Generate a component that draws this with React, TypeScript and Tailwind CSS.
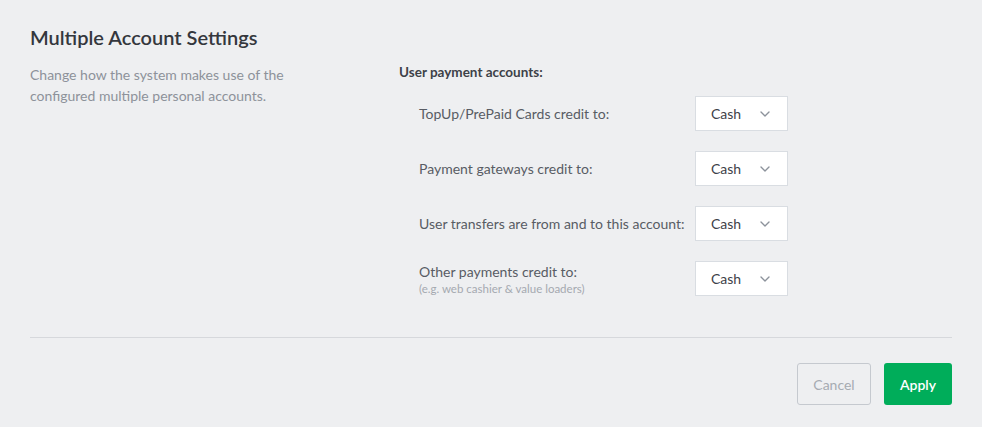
import { ChevronDown } from "lucide-react";

const ROWS = [
  { label: "TopUp/PrePaid Cards credit to:", hint: "" },
  { label: "Payment gateways credit to:", hint: "" },
  { label: "User transfers are from and to this account:", hint: "" },
  { label: "Other payments credit to:", hint: "(e.g. web cashier & value loaders)" },
];

function AccountSelect() {
  return (
    <div className="w-[93px] h-[35px] flex items-center justify-between pl-[15px] pr-[14px] bg-white border border-[#d9dde2] text-[14px] text-[#3d4148]">
      <span>Cash</span>
      <ChevronDown className="w-[16px] h-[16px] text-[#8c929b]" strokeWidth={2} />
    </div>
  );
}

export default function App() {
  return (
    <div className="w-[982px] h-[427px] bg-[#eeeff1] px-[30px] pt-[24px]" style={{ fontFamily: "Lato, 'Noto Sans', sans-serif" }}>
      <div className="grid grid-cols-[369px_1fr]">
        <div>
          <h1 className="text-[20px] font-semibold text-[#34373d] leading-[26px]">Multiple Account Settings</h1>
          <p className="mt-[14px] text-[14px] leading-[21px] text-[#8d929a] w-[290px]">
            Change how the system makes use of the configured multiple personal accounts.
          </p>
        </div>
        <div className="pt-[38px]">
          <div className="text-[13.5px] font-bold text-[#3d4148] leading-[20px]">User payment accounts:</div>
          <div className="mt-[14px] flex flex-col gap-[20px] pl-[20px]">
            {ROWS.map(r => (
              <div key={r.label} className="flex items-center">
                <div className="w-[276px]">
                  <div className="text-[14px] text-[#585c64] leading-[19px]">{r.label}</div>
                  {r.hint && <div className="text-[11.5px] text-[#a5a9b0] leading-[15px]">{r.hint}</div>}
                </div>
                <AccountSelect />
              </div>
            ))}
          </div>
        </div>
      </div>
      <div className="mt-[41px] border-t border-[#d6d8dc]" />
      <div className="mt-[25px] flex justify-end gap-[13px]">
        <button className="w-[74px] h-[42px] rounded-[3px] border border-[#c5c9cf] text-[14px] text-[#a6abb2]">Cancel</button>
        <button className="w-[68px] h-[42px] rounded-[3px] bg-[#00ad5a] text-[14px] font-semibold text-white">Apply</button>
      </div>
    </div>
  );
}
